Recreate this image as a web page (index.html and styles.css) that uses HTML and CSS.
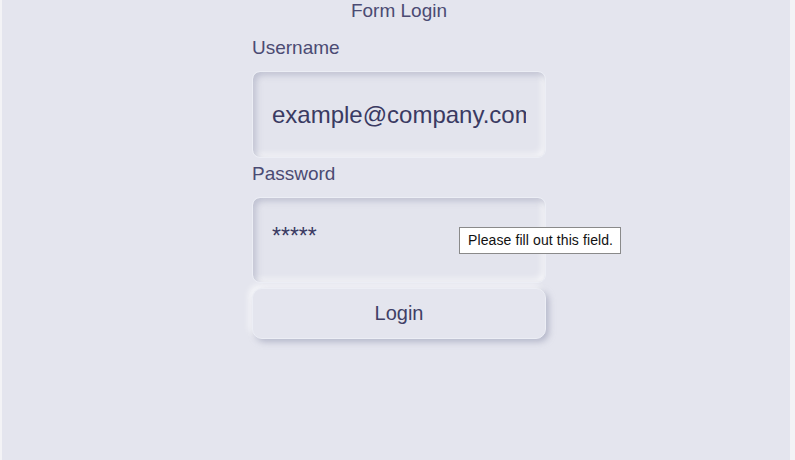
FILE: index.html
```html
<!DOCTYPE html>
<html lang="en">
<head>
<meta charset="utf-8">
<title>Form Login</title>
<link rel="stylesheet" href="styles.css">
</head>
<body>
<main class="page">
  <h1 class="title">Form Login</h1>
  <form class="form">
    <label class="label" for="user">Username</label>
    <input class="field" id="user" type="text" value="example@company.com">
    <label class="label label-pass" for="pass">Password</label>
    <div class="field-wrap">
      <input class="field field-pass" id="pass" type="text" value="*****">
      <div class="tooltip">Please fill out this field.</div>
    </div>
    <button class="btn" type="button">Login</button>
  </form>
</main>
</body>
</html>
```

FILE: styles.css
```css
html, body {
  margin: 0;
  height: 100%;
}
body {
  background: #f3f3f6;
  padding: 0 5px 0 2px;
  box-sizing: border-box;
  font-family: "Liberation Sans", Arial, sans-serif;
}
.page {
  height: 460px;
  background: #e4e5ee;
  display: flex;
  flex-direction: column;
  align-items: center;
  padding-left: 6px;
  box-sizing: border-box;
}
.title {
  margin: 0;
  font-size: 19px;
  font-weight: normal;
  line-height: 22px;
  color: #4b4b73;
}
.form {
  width: 294px;
  display: flex;
  flex-direction: column;
  margin-top: 15px;
}
.label {
  font-size: 19px;
  line-height: 22px;
  color: #4b4b73;
  margin-bottom: 12px;
}
.label-pass {
  margin-top: 5px;
}
.field {
  box-sizing: border-box;
  width: 294px;
  height: 87px;
  margin: 0;
  padding: 0 19px;
  border: 1px solid #eceef5;
  border-radius: 8px;
  background: #e3e4ed;
  font-family: "Liberation Sans", Arial, sans-serif;
  font-size: 24px;
  color: #3a3a62;
  box-shadow: inset 3px 3px 6px rgba(160, 164, 186, 0.55), inset -3px -3px 6px rgba(255, 255, 255, 0.7);
  outline: none;
}
.field-wrap {
  position: relative;
}
.field-pass {
  height: 86px;
  display: block;
  padding-bottom: 7px;
  font-size: 23px;
}
.tooltip {
  position: absolute;
  left: 207px;
  top: 30px;
  width: 162px;
  height: 27px;
  box-sizing: border-box;
  background: #ffffff;
  border: 1px solid #8a8a8a;
  font-family: "Liberation Sans", Arial, sans-serif;
  font-size: 14px;
  line-height: 25px;
  padding-left: 8px;
  color: #111111;
  white-space: nowrap;
  letter-spacing: 0.1px;
}
.btn {
  margin-top: 5px;
  width: 294px;
  height: 51px;
  border: 1px solid #eceef5;
  border-radius: 10px;
  background: #e4e5ee;
  font-family: "Liberation Sans", Arial, sans-serif;
  font-size: 20px;
  color: #3f3f66;
  box-shadow: 3px 3px 6px rgba(150, 154, 178, 0.6), -3px -3px 6px rgba(255, 255, 255, 0.75);
  cursor: pointer;
}
```
